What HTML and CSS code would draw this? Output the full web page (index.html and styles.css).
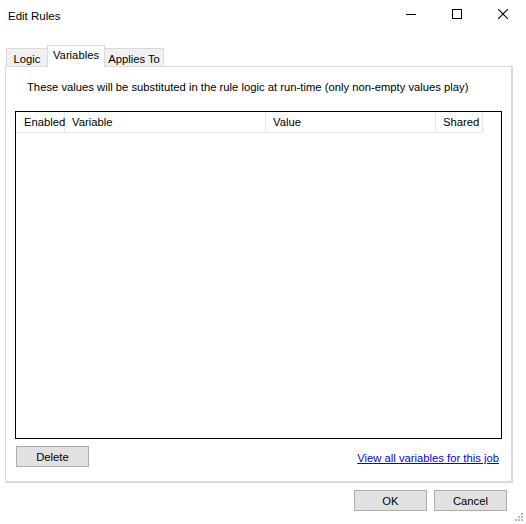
FILE: index.html
```html
<!DOCTYPE html>
<html>
<head>
<meta charset="utf-8">
<title>Edit Rules</title>
<link rel="stylesheet" href="styles.css">
</head>
<body>
<div class="window">
  <div class="titlebar">
    <div class="title">Edit Rules</div>
    <div class="caption">
      <div class="cbtn"><svg width="10" height="10" viewBox="0 0 10 10"><rect x="0" y="5" width="10" height="1" fill="#000"/></svg></div>
      <div class="cbtn"><svg width="10" height="10" viewBox="0 0 10 10"><rect x="0.5" y="0.5" width="9" height="9" fill="none" stroke="#000" stroke-width="1"/></svg></div>
      <div class="cbtn"><svg width="10" height="10" viewBox="0 0 10 10"><path d="M0 0 L10 10 M10 0 L0 10" stroke="#000" stroke-width="1.1" fill="none"/></svg></div>
    </div>
  </div>
  <div class="content">
    <div class="tabs">
      <div class="tab tab-logic">Logic</div>
      <div class="tab tab-vars active">Variables</div>
      <div class="tab tab-applies">Applies To</div>
    </div>
    <div class="panel">
      <p class="desc">These values will be substituted in the rule logic at run-time (only non-empty values play)</p>
      <div class="list">
        <div class="list-header">
          <div class="col col-enabled">Enabled</div>
          <div class="col col-variable">Variable</div>
          <div class="col col-value">Value</div>
          <div class="col col-shared">Shared</div>
        </div>
      </div>
      <div class="panel-footer">
        <button class="btn">Delete</button>
        <a class="link" href="#">View all variables for this job</a>
      </div>
    </div>
    <div class="footer">
      <button class="btn">OK</button>
      <button class="btn">Cancel</button>
    </div>
  </div>
  <svg class="grip" width="9" height="9" viewBox="0 0 9 9">
    <rect x="6" y="0" width="2" height="2" fill="#b8b8b8"/>
    <rect x="3" y="3" width="2" height="2" fill="#b8b8b8"/>
    <rect x="6" y="3" width="2" height="2" fill="#b8b8b8"/>
    <rect x="0" y="6" width="2" height="2" fill="#b8b8b8"/>
    <rect x="3" y="6" width="2" height="2" fill="#b8b8b8"/>
    <rect x="6" y="6" width="2" height="2" fill="#b8b8b8"/>
  </svg>
</div>
</body>
</html>
```

FILE: styles.css
```css
* { box-sizing: border-box; }
html, body { margin: 0; padding: 0; background: #fff; }
body {
  font-family: "Liberation Sans", Arial, sans-serif;
  font-size: 11.25px;
  color: #000;
}
.window {
  position: relative;
  width: 526px;
  height: 524px;
  background: #fff;
}
.titlebar {
  height: 30px;
  display: flex;
  align-items: center;
  justify-content: space-between;
}
.title {
  padding-left: 8px;
  font-size: 11.5px;
  padding-top: 1px;
}
.caption { display: flex; height: 30px; }
.cbtn {
  width: 46px;
  height: 30px;
  display: flex;
  align-items: center;
  justify-content: center;
}
.cbtn svg { display: block; margin-bottom: 2px; }

.content { padding-left: 5px; }

.tabs {
  height: 36px;
  display: flex;
  align-items: flex-end;
  padding-left: 1px;
}
.tab {
  height: 18px;
  border: 1px solid #d9d9d9;
  border-bottom: none;
  background: #f0f0f0;
  display: flex;
  align-items: center;
  justify-content: center;
  padding-top: 3px;
}
.tab-logic { width: 41px; border-right: none; }
.tab-vars { width: 58px; }
.tab-applies { width: 59px; border-left: none; }
.tab.active {
  height: 22px;
  background: #fff;
  margin-bottom: -1px;
  position: relative;
  z-index: 1;
  padding-top: 0;
  padding-bottom: 4px;
}

.panel {
  width: 508px;
  height: 417px;
  border-style: solid;
  border-color: #dadada;
  border-width: 1px 2px 2px 1px;
  display: flex;
  flex-direction: column;
}
.desc {
  margin: 14px 0 0 21px;
  line-height: 13px;
}
.list {
  margin: 17px 0 0 9px;
  width: 487px;
  height: 328px;
  border: 1px solid #000;
}
.list-header {
  display: flex;
  height: 21px;
}
.col {
  height: 21px;
  border-right: 1px solid #e5e5e5;
  border-bottom: 1px solid #e5e5e5;
  padding-left: 7px;
  line-height: 21px;
  white-space: nowrap;
}
.col-enabled { width: 49px; padding-left: 8px; }
.col-variable { width: 201px; }
.col-value { width: 170px; }
.col-shared { width: 47px; }

.panel-footer {
  display: flex;
  justify-content: space-between;
  align-items: flex-start;
  margin: 7px 12px 0 10px;
}
.btn {
  font-family: "Liberation Sans", Arial, sans-serif;
  font-size: 11.25px;
  color: #000;
  width: 73px;
  height: 21px;
  background: #e1e1e1;
  border: 1px solid #adadad;
  padding: 0;
  margin: 0;
}
.link {
  color: #0000ff;
  text-decoration: underline;
  margin-top: 6px;
  line-height: 13px;
}
.footer {
  display: flex;
  justify-content: flex-end;
  gap: 7px;
  margin-top: 7px;
  padding-right: 19px;
}
.grip {
  position: absolute;
  right: 2px;
  bottom: 2px;
}
```
